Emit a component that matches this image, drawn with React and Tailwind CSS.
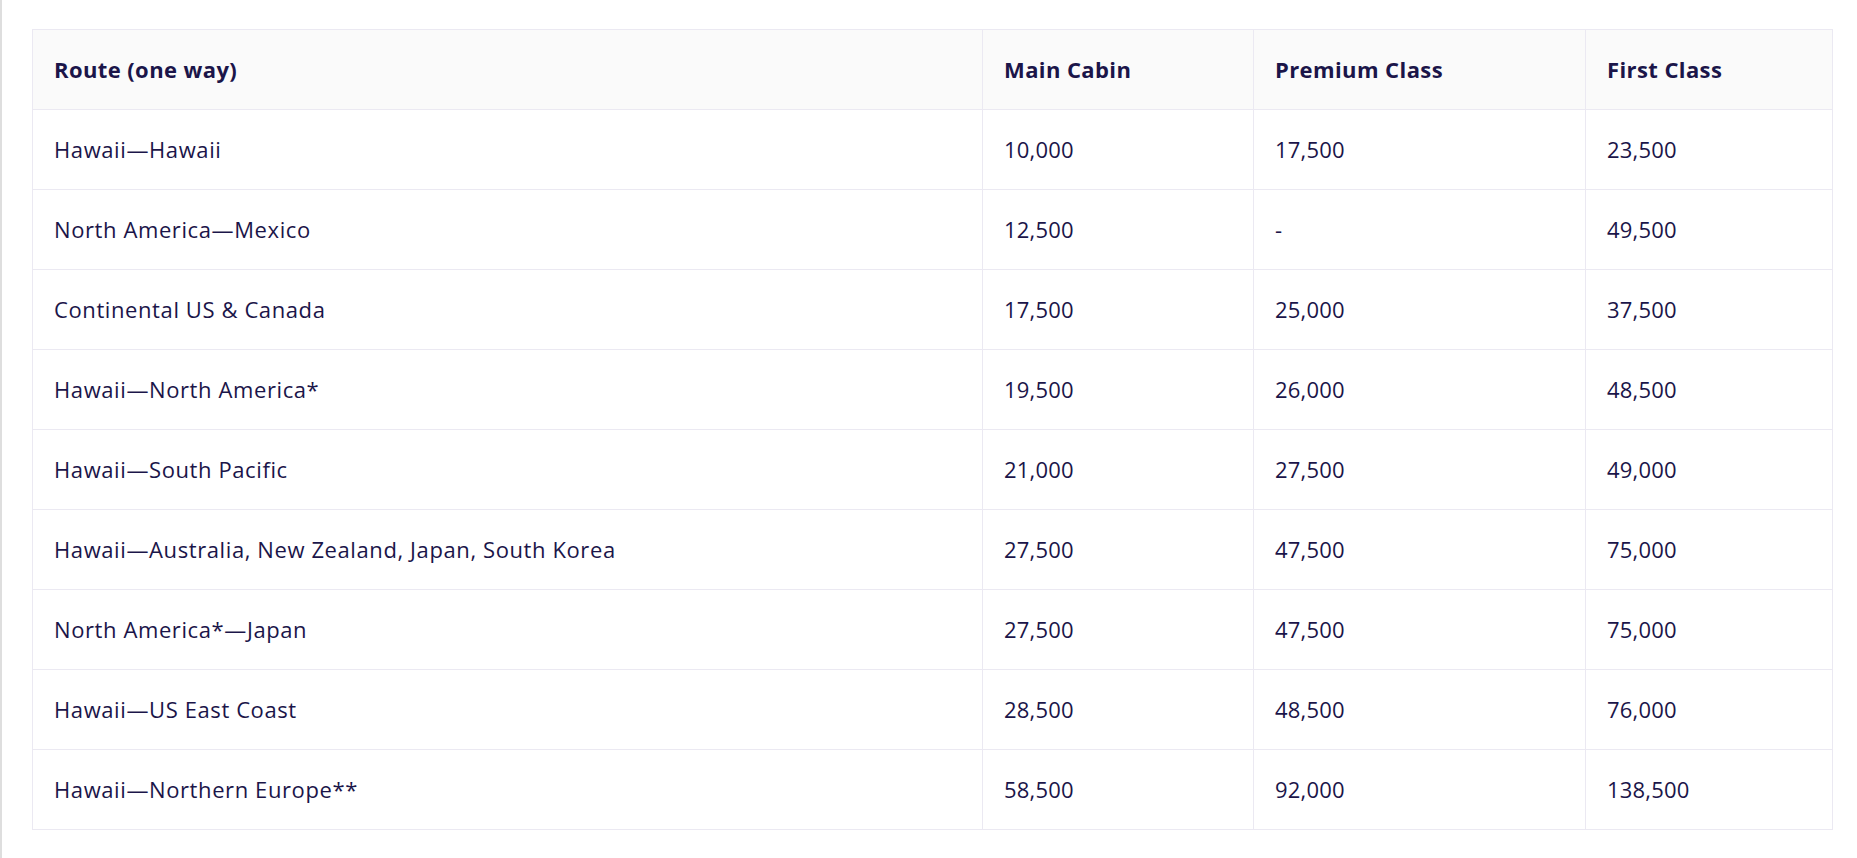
import React from "react";

const rows = [
  ["Hawaii\u2014Hawaii", "10,000", "17,500", "23,500"],
  ["North America\u2014Mexico", "12,500", "-", "49,500"],
  ["Continental US & Canada", "17,500", "25,000", "37,500"],
  ["Hawaii\u2014North America*", "19,500", "26,000", "48,500"],
  ["Hawaii\u2014South Pacific", "21,000", "27,500", "49,000"],
  ["Hawaii\u2014Australia, New Zealand, Japan, South Korea", "27,500", "47,500", "75,000"],
  ["North America*\u2014Japan", "27,500", "47,500", "75,000"],
  ["Hawaii\u2014US East Coast", "28,500", "48,500", "76,000"],
  ["Hawaii\u2014Northern Europe**", "58,500", "92,000", "138,500"],
];

const headers = ["Route (one way)", "Main Cabin", "Premium Class", "First Class"];

export default function App() {
  return (
    <div
      className="min-h-[858px] w-full bg-white border-l-2 border-[#dedede] pl-[30px] pt-[29px] text-[#1b1549]"
      style={{ fontFamily: "'Open Sans', 'Liberation Sans', sans-serif" }}
    >
      <table className="table-fixed border-collapse w-[1800px]">
        <colgroup>
          <col className="w-[950px]" />
          <col className="w-[271px]" />
          <col className="w-[332px]" />
          <col className="w-[247px]" />
        </colgroup>
        <thead>
          <tr className="bg-[#fafafa] h-[80px]">
            {headers.map((h) => (
              <th
                key={h}
                className="border border-[#ebe9f2] px-[21px] text-left align-middle text-[22px] font-bold tracking-[0.4px]"
              >
                {h}
              </th>
            ))}
          </tr>
        </thead>
        <tbody>
          {rows.map((r, i) => (
            <tr key={i} className="h-[80px]">
              {r.map((c, j) => (
                <td
                  key={j}
                  className={
                    j === 0
                      ? "border border-[#ebe9f2] px-[21px] align-middle text-[22px] font-normal tracking-[0.6px]"
                      : "border border-[#ebe9f2] px-[21px] align-middle text-[22px] font-normal tracking-[0.2px]"
                  }
                >
                  {c}
                </td>
              ))}
            </tr>
          ))}
        </tbody>
      </table>
    </div>
  );
}
